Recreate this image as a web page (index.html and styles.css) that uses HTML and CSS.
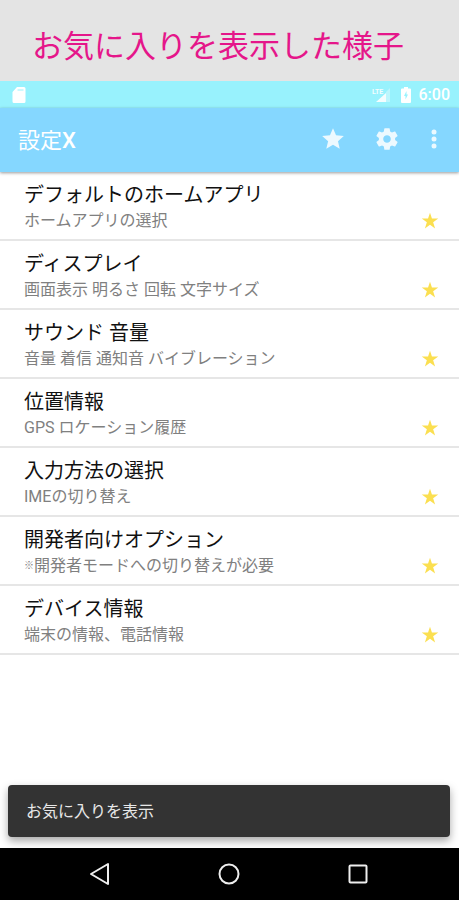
FILE: index.html
```html
<!DOCTYPE html>
<html lang="ja">
<head>
    <meta charset="UTF-8">
    <meta name="viewport" content="width=device-width, initial-scale=1.0">
    <title>設定X</title>
    <link rel="stylesheet" href="styles.css">
</head>
<body>
    <svg width="0" height="0" class="defs">
        <symbol id="star" viewBox="0 0 24 24">
            <path d="M12 1l2.600 7.800h8.400l-6.800 4.900 2.600 8.300-6.800-5-6.800 5 2.600-8.300L1 8.800h8.400z"/>
        </symbol>
    </svg>
    <h1 class="caption">お気に入りを表示した様子</h1>
    <div class="status-bar">
        <svg class="sd-icon" width="14" height="16" viewBox="0 0 14 16"><path fill-rule="evenodd" d="M5 0h7q1.500 0 1.500 1.500v13q0 1.500-1.500 1.500H2Q.5 16 .5 14.500V5zM5.500 2.500v1h6v-1z"/></svg>
        <svg class="signal-icon" width="20" height="16" viewBox="0 0 20 16">
            <text x="0" y="7" font-size="7" font-weight="bold">LTE</text>
            <path d="M4 15 14 6v9z"/>
            <path opacity=".4" d="M14 5l4-4v14h-4z"/>
        </svg>
        <svg class="battery-icon" width="10" height="16" viewBox="0 0 10 16"><path fill-rule="evenodd" d="M3 0h4v1.500h2q1 0 1 1V15q0 1-1 1H1q-1 0-1-1V2.500q0-1 1-1h2zM5.500 4 3 9h1.500v3.500L7 7.500H5.500z"/></svg>
        <span class="clock">6:00</span>
    </div>
    <header class="app-bar">
        <h2>設定<b>X</b></h2>
        <button class="icon-btn" aria-label="お気に入り"><svg width="26" height="26" viewBox="0 0 24 24"><path d="M12 17.300 18.200 21l-1.600-7L22 9.200l-7.200-.600L12 2 9.200 8.600 2 9.200 7.500 14l-1.700 7z"/></svg></button>
        <button class="icon-btn" aria-label="設定">
            <svg width="26" height="26" viewBox="0 0 24 24"><path d="M19.430 12.980c.040-.320.070-.640.070-.980s-.030-.660-.070-.980l2.110-1.650c.190-.150.240-.420.120-.640l-2-3.460c-.120-.220-.390-.300-.610-.220l-2.490 1c-.520-.400-1.080-.730-1.690-.980l-.380-2.650C14.460 2.180 14.250 2 14 2h-4c-.250 0-.460.180-.490.420l-.380 2.650c-.610.250-1.170.590-1.690.980l-2.490-1c-.230-.090-.490 0-.610.220l-2 3.460c-.130.220-.070.490.120.640l2.110 1.650c-.040.320-.070.650-.070.980s.030.660.070.980l-2.110 1.650c-.190.150-.240.420-.120.640l2 3.460c.120.220.390.300.610.220l2.490-1c.520.400 1.080.730 1.690.980l.380 2.650c.030.240.240.420.490.420h4c.250 0 .460-.180.490-.420l.380-2.650c.610-.250 1.170-.590 1.690-.980l2.490 1c.230.090.490 0 .610-.220l2-3.460c.120-.220.070-.490-.120-.640zM12 15.500c-1.930 0-3.500-1.570-3.500-3.500s1.570-3.500 3.500-3.500 3.500 1.570 3.500 3.500-1.570 3.500-3.500 3.500z"/></svg>
        </button>
        <button class="icon-btn more" aria-label="メニュー">
            <svg width="6" height="20" viewBox="0 0 6 20"><circle cx="3" cy="3" r="2.500"/><circle cx="3" cy="10" r="2.500"/><circle cx="3" cy="17" r="2.500"/></svg>
        </button>
    </header>
    <main>
        <ul class="list">
            <li>
                <div class="text">
                    <h3>デフォルトのホームアプリ</h3>
                    <p>ホームアプリの選択</p>
                </div>
                <svg class="fav"><use href="#star"/></svg>
            </li>
            <li>
                <div class="text">
                    <h3>ディスプレイ</h3>
                    <p>画面表示 明るさ 回転 文字サイズ</p>
                </div>
                <svg class="fav"><use href="#star"/></svg>
            </li>
            <li>
                <div class="text">
                    <h3>サウンド 音量</h3>
                    <p>音量 着信 通知音 バイブレーション</p>
                </div>
                <svg class="fav"><use href="#star"/></svg>
            </li>
            <li>
                <div class="text">
                    <h3>位置情報</h3>
                    <p>GPS ロケーション履歴</p>
                </div>
                <svg class="fav"><use href="#star"/></svg>
            </li>
            <li>
                <div class="text">
                    <h3>入力方法の選択</h3>
                    <p>IMEの切り替え</p>
                </div>
                <svg class="fav"><use href="#star"/></svg>
            </li>
            <li>
                <div class="text">
                    <h3>開発者向けオプション</h3>
                    <p><small>※</small>開発者モードへの切り替えが必要</p>
                </div>
                <svg class="fav"><use href="#star"/></svg>
            </li>
            <li>
                <div class="text">
                    <h3>デバイス情報</h3>
                    <p>端末の情報、電話情報</p>
                </div>
                <svg class="fav"><use href="#star"/></svg>
            </li>
        </ul>
        <div class="snackbar" role="status">お気に入りを表示</div>
    </main>
    <nav class="nav-bar">
        <button aria-label="戻る"><svg width="24" height="24" viewBox="0 0 24 24"><path d="M20 2v20L3 12z"/></svg></button>
        <button aria-label="ホーム"><svg width="24" height="24" viewBox="0 0 24 24"><circle cx="12" cy="12" r="9.500"/></svg></button>
        <button aria-label="履歴"><svg width="24" height="24" viewBox="0 0 24 24"><rect x="3.500" y="3.500" width="17" height="17" rx="1"/></svg></button>
    </nav>
</body>
</html>
```
FILE: styles.css
```css
* {
    box-sizing: border-box;
}

body {
    font-family: Roboto, "Noto Sans CJK JP", sans-serif;
    background-color: #fff;
    margin: 0;
    min-height: 100vh;
    display: flex;
    flex-direction: column;
}

h1, h2, h3, p, ul {
    margin: 0;
    padding: 0;
    font-weight: normal;
}

button {
    background: none;
    border: none;
    padding: 0;
    cursor: pointer;
}

svg {
    display: block;
}

.defs {
    position: absolute;
}

.caption {
    background-color: #e4e4e4;
    color: #e5168a;
    padding: 23px 32px 10px;
    font-size: 31px;
    line-height: 48px;
    white-space: nowrap;
}

.status-bar {
    display: flex;
    align-items: center;
    height: 27px;
    padding: 0 9px 0 12px;
    background-color: #98f2fd;
    color: #fff;
    fill: #fff;
}

.signal-icon {
    margin-left: auto;
    opacity: 0.9;
}

.battery-icon {
    margin: 0 8px 0 9px;
}

.clock {
    font-size: 16px;
    font-weight: 500;
}

.app-bar {
    display: flex;
    align-items: center;
    height: 64px;
    padding: 0 12px 2px 18px;
    background-color: #85d7ff;
    box-shadow: 0 1px 3px rgba(0, 0, 0, 0.4);
    z-index: 1;
}

.app-bar h2 {
    flex: 1;
    padding-bottom: 2px;
    color: #fff;
    font-size: 22px;
}

.app-bar b {
    font-weight: 500;
}

.icon-btn {
    display: flex;
    justify-content: center;
    width: 54px;
    fill: #ecf9ff;
}

.icon-btn.more {
    width: 26px;
    margin-left: 7px;
}

main {
    flex: 1;
    display: flex;
    flex-direction: column;
}

.list {
    list-style: none;
}

.list li {
    display: flex;
    align-items: flex-end;
    padding: 9px 20px 6px 24px;
    border-bottom: 2px solid #e6e6e6;
}

.text {
    flex: 1;
}

.text h3 {
    font-size: 20px;
    line-height: 28px;
    color: #111;
}

.text p {
    font-size: 16px;
    line-height: 24px;
    color: #808080;
}

.text small {
    font-size: 10px;
    line-height: 1;
    vertical-align: 2px;
}

.fav {
    width: 18px;
    height: 18px;
    margin-bottom: 3px;
    fill: #fbdf50;
}

.snackbar {
    margin: auto 9px 11px 8px;
    padding: 15px 18px 13px;
    font-size: 16px;
    line-height: 24px;
    color: #e8e8e8;
    background-color: #333;
    border-radius: 4px;
    box-shadow: 0 4px 8px rgba(0, 0, 0, 0.35);
}

.nav-bar {
    display: grid;
    grid-template-columns: repeat(3, 1fr);
    height: 52px;
    padding: 0 37px 0 35px;
    background-color: #000;
    z-index: 1;
}

.nav-bar button {
    display: flex;
    align-items: center;
    justify-content: center;
}

.nav-bar svg {
    fill: none;
    stroke: #eee;
    stroke-width: 2;
    stroke-linejoin: round;
}
```
